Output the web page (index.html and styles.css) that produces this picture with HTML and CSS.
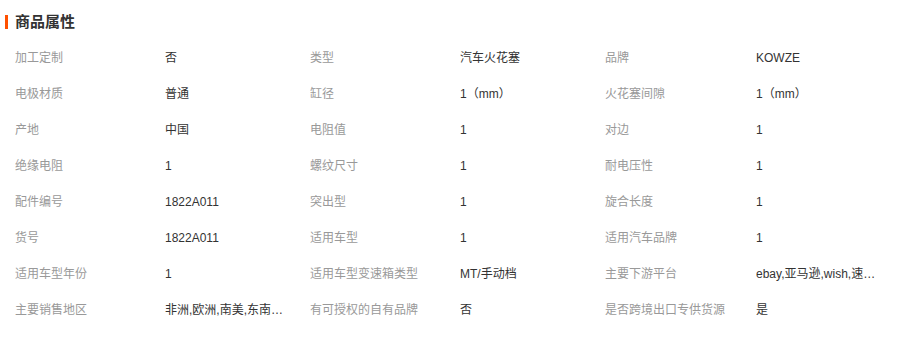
FILE: index.html
```html
<!DOCTYPE html>
<html lang="zh">
<head>
<meta charset="utf-8">
<link rel="stylesheet" href="styles.css">
</head>
<body>
<div class="panel">
  <div class="head"><span class="bar"></span><h2 class="title">商品属性</h2></div>
  <div class="grid">
    <div class="k">加工定制</div><div class="v">否</div>
    <div class="k">类型</div><div class="v">汽车火花塞</div>
    <div class="k">品牌</div><div class="v">KOWZE</div>

    <div class="k">电极材质</div><div class="v">普通</div>
    <div class="k">缸径</div><div class="v">1（mm）</div>
    <div class="k">火花塞间隙</div><div class="v">1（mm）</div>

    <div class="k">产地</div><div class="v">中国</div>
    <div class="k">电阻值</div><div class="v">1</div>
    <div class="k">对边</div><div class="v">1</div>

    <div class="k">绝缘电阻</div><div class="v">1</div>
    <div class="k">螺纹尺寸</div><div class="v">1</div>
    <div class="k">耐电压性</div><div class="v">1</div>

    <div class="k">配件编号</div><div class="v">1822A011</div>
    <div class="k">突出型</div><div class="v">1</div>
    <div class="k">旋合长度</div><div class="v">1</div>

    <div class="k">货号</div><div class="v">1822A011</div>
    <div class="k">适用车型</div><div class="v">1</div>
    <div class="k">适用汽车品牌</div><div class="v">1</div>

    <div class="k">适用车型年份</div><div class="v">1</div>
    <div class="k">适用车型变速箱类型</div><div class="v">MT/手动档</div>
    <div class="k">主要下游平台</div><div class="v">ebay,亚马逊,wish,速卖通,独立站,LAZADA</div>

    <div class="k">主要销售地区</div><div class="v">非洲,欧洲,南美,东南亚,北美,东北亚,中东</div>
    <div class="k">有可授权的自有品牌</div><div class="v">否</div>
    <div class="k">是否跨境出口专供货源</div><div class="v">是</div>
  </div>
</div>
</body>
</html>
```

FILE: styles.css
```css
html, body {
  margin: 0;
  padding: 0;
  background: #ffffff;
}

body {
  font-family: "Liberation Sans", "Noto Sans CJK SC", sans-serif;
  font-size: 12px;
  color: #333333;
}

.panel {
  width: 900px;
}

.head {
  display: flex;
  align-items: center;
  padding: 12px 0 8px 5px;
  height: 20px;
}

.bar {
  display: block;
  width: 3px;
  height: 14px;
  background: #ff5000;
  margin-right: 7px;
}

.title {
  margin: 0;
  font-size: 15px;
  line-height: 20px;
  font-weight: bold;
  color: #333333;
}

.grid {
  display: grid;
  grid-template-columns: 150px 145px 150px 145px 151px 144px;
  grid-auto-rows: 36px;
  padding-left: 15px;
}

.k, .v {
  line-height: 36px;
  white-space: nowrap;
  overflow: hidden;
  text-overflow: ellipsis;
}

.k {
  color: #999999;
}

.v {
  color: #333333;
  max-width: 124px;
}
```
